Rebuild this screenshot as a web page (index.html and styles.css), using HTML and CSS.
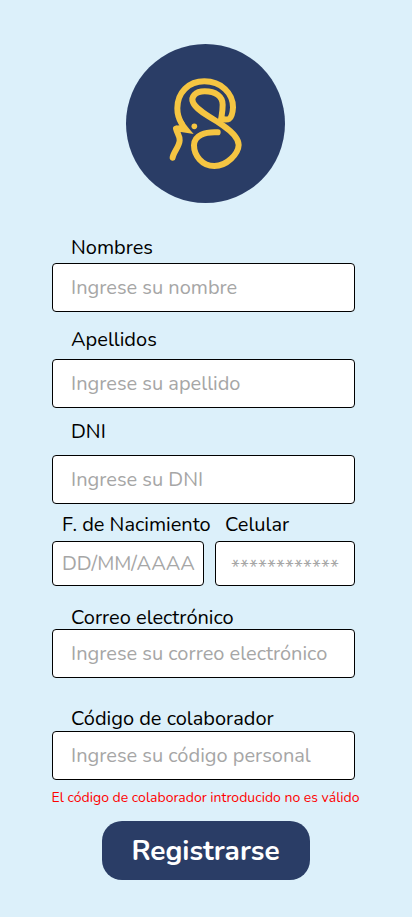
FILE: index.html
```html
<!DOCTYPE html>
<html lang="es">
<head>
<meta charset="utf-8">
<meta name="viewport" content="width=device-width, initial-scale=1">
<title>Registro</title>
<link rel="stylesheet" href="styles.css">
</head>
<body>
<main class="screen">
  <div class="logo">
    <svg class="logo-mark" viewBox="0 0 300 345" aria-hidden="true">
      <g fill="none" stroke="#f5c542" stroke-width="18" stroke-linecap="round" stroke-linejoin="round">
        <path d="M79 174C70 159 67 146 67 130C67 82 101 49 148 49C199 49 234 85 234 127C233 144 230 156 223 161C217 165 209 164 200 162"/>
        <path d="M198 165C200 150 203 139 203 119C203 94 182 79 149 79C120 79 107 96 114 112C123 135 166 156 205 182C234 202 251 220 251 240C250 266 216 303 178 303C141 303 117 271 117 241C117 210 151 200 188 202"/>
        <path d="M63 191C66 204 75 213 74 226C73 245 55 262 53 278"/>
      </g>
      <path fill="#f5c542" d="M62 182L74 181L70 172L86 168C93 181 103 193 116 207L78 201L66 203Z"/>
      <circle cx="118" cy="184" r="8.5" fill="#f5c542"/>
    </svg>
  </div>
  <form class="form">
    <div class="field first-name">
      <label for="nombre">Nombres</label>
      <input id="nombre" type="text" placeholder="Ingrese su nombre">
    </div>
    <div class="field last-name">
      <label for="apellido">Apellidos</label>
      <input id="apellido" type="text" placeholder="Ingrese su apellido">
    </div>
    <div class="field dni">
      <label for="dni">DNI</label>
      <input id="dni" type="text" placeholder="Ingrese su DNI">
    </div>
    <div class="row">
      <div class="field birth">
        <label for="nacimiento">F. de Nacimiento</label>
        <input id="nacimiento" type="text" placeholder="DD/MM/AAAA">
      </div>
      <div class="field phone">
        <label for="celular">Celular</label>
        <input id="celular" type="text" placeholder="************">
      </div>
    </div>
    <div class="field email">
      <label for="correo">Correo electrónico</label>
      <input id="correo" type="text" placeholder="Ingrese su correo electrónico">
    </div>
    <div class="field code">
      <label for="codigo">Código de colaborador</label>
      <input id="codigo" type="text" placeholder="Ingrese su código personal">
    </div>
    <p class="error">El código de colaborador introducido no es válido</p>
    <button class="submit" type="button">Registrarse</button>
  </form>
</main>
</body>
</html>
```
FILE: styles.css
```css
* { box-sizing: border-box; }
body {
  margin: 0;
  background: #dcf0fa;
  font-family: Nunito, Lato, sans-serif;
  color: #000;
}
.screen {
  height: 917px;
  padding-top: 44px;
  overflow: hidden;
}
.logo {
  display: flex;
  width: 159px;
  height: 159px;
  margin-left: 126px;
  padding: 21px 0 0 29px;
  border-radius: 50%;
  background: #2a3d66;
}
.logo-mark { width: 100px; height: 115px; }
.form {
  display: flex;
  flex-direction: column;
  width: 303px;
  margin: 31px 0 0 52px;
}
.field {
  display: flex;
  flex-direction: column;
}
.field label {
  height: 27px;
  padding-left: 19px;
  font-size: 20px;
  line-height: 27px;
  white-space: nowrap;
}
.field input {
  width: 100%;
  height: 49px;
  padding: 0 0 0 18px;
  border: 1px solid #000;
  border-radius: 4px;
  background: #fff;
  font: 400 20px/27px Nunito, Lato, sans-serif;
}
.field input::placeholder { color: #a6a6a6; opacity: 1; }
.first-name { gap: 2px; }
.last-name { gap: 6px; margin-top: 14px; }
.dni { gap: 10px; margin-top: 10px; }
.row {
  display: flex;
  gap: 11px;
  margin-top: 7px;
}
.row .field { gap: 3px; }
.row .field label { padding-left: 10px; }
.row .field input { height: 45px; padding-left: 9px; }
.birth { width: 152px; }
.phone { width: 140px; }
.row .phone input { padding: 7px 0 0 15px; }
.email { margin-top: 18px; }
.email label { margin-bottom: -2px; }
.code { margin-top: 27px; }
.code label { margin-bottom: -1px; }
.error {
  height: 19px;
  margin: 8px 0 0 -0.5px;
  color: #ff0000;
  font-size: 14px;
  line-height: 19px;
  white-space: nowrap;
}
.submit {
  width: 208px;
  height: 59px;
  margin: 14px 0 0 50px;
  padding: 0 1px 0 0;
  border: 0;
  border-radius: 20px;
  background: #2a3d66;
  color: #fff;
  font: 700 28px/38px Nunito, Lato, sans-serif;
}
```
